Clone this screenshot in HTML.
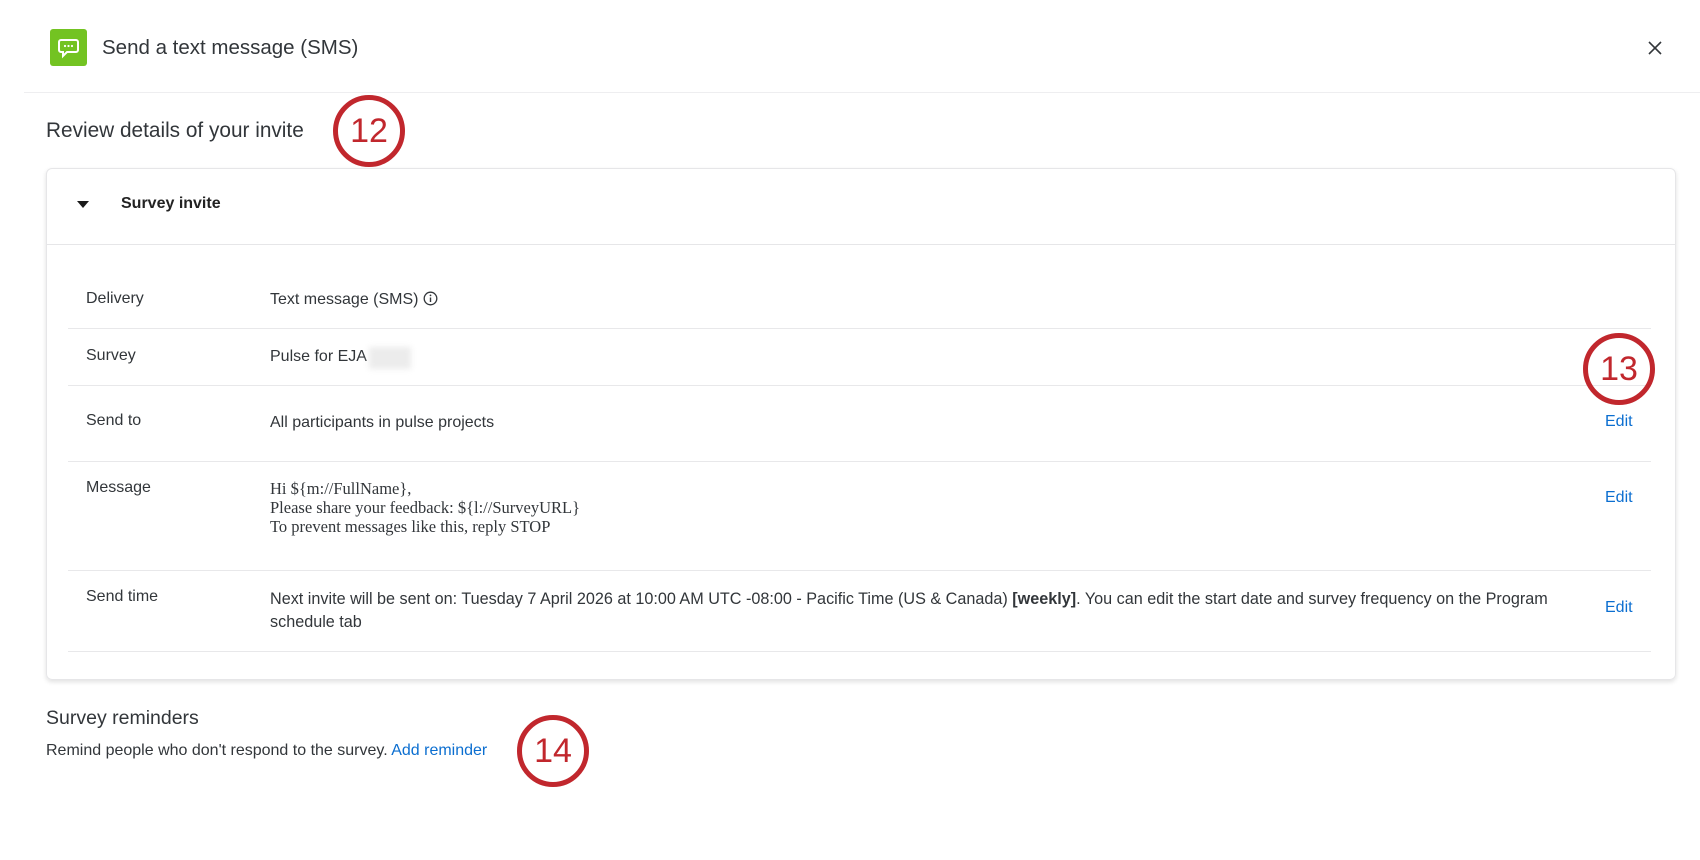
<!DOCTYPE html>
<html><head><meta charset="utf-8"><style>
*{margin:0;padding:0;box-sizing:border-box}
body{width:1700px;height:860px;background:#fff;font-family:"Liberation Sans",sans-serif;color:#32363a;position:relative;overflow:hidden}
.a{position:absolute;white-space:nowrap}
.t{font-size:16px;line-height:20px}
.line{position:absolute;left:68px;width:1583px;height:1px;background:#e8e8ea}
.edit{color:#0b6ed0;font-size:16px}
.circ{position:absolute;width:72px;height:72px;border:5px solid #c1272d;border-radius:50%;color:#c1272d;font-size:34px;line-height:62px;text-align:center}
</style></head><body>
<div class="a" style="left:50px;top:29px;width:37px;height:37px;background:#73c322;border-radius:3px">
<svg width="37" height="37" viewBox="0 0 37 37"><path d="M11 11h15a2 2 0 0 1 2 2v8a2 2 0 0 1-2 2h-9l-4 4v-4h-2a2 2 0 0 1-2-2v-8a2 2 0 0 1 2-2z" fill="none" stroke="#fff" stroke-width="2"/><circle cx="15" cy="17" r="1.1" fill="#fff"/><circle cx="18.5" cy="17" r="1.1" fill="#fff"/><circle cx="22" cy="17" r="1.1" fill="#fff"/></svg></div>
<div class="a" style="left:102px;top:36px;font-size:20.5px;line-height:24px">Send a text message (SMS)</div>
<svg class="a" style="left:1647px;top:40px" width="16" height="16"><path d="M2 2L14 14M14 2L2 14" stroke="#32363a" stroke-width="1.6"/></svg>
<div class="a" style="left:24px;top:92px;width:1676px;height:1px;background:#eeeef0"></div>
<div class="a" style="left:46px;top:119px;font-size:20.8px;line-height:24px">Review details of your invite</div>
<div class="circ" style="left:333px;top:95px">12</div>
<div class="a" style="left:46px;top:168px;width:1630px;height:512px;border:1px solid #e6e6e8;border-radius:6px;box-shadow:0 2px 5px rgba(0,0,0,.12)"></div>
<div class="a" style="left:47px;top:244px;width:1628px;height:1px;background:#e6e6e8"></div>
<svg class="a" style="left:77px;top:201px" width="12" height="7"><path d="M0 0h12L6 7z" fill="#1a1a1a"/></svg>
<div class="a" style="left:121px;top:195px;font-size:16px;font-weight:bold;color:#222">Survey invite</div>
<div class="a t" style="left:86px;top:289px">Delivery</div>
<div class="a t" style="left:270px;top:290px">Text message (SMS)</div>
<svg class="a" style="left:423px;top:291px" width="15" height="15"><circle cx="7.5" cy="7.5" r="6.3" fill="none" stroke="#32363a" stroke-width="1.3"/><path d="M7.5 6.5v4.5" stroke="#32363a" stroke-width="1.4"/><circle cx="7.5" cy="4.4" r=".9" fill="#32363a"/></svg>
<div class="line" style="top:328px"></div>
<div class="a t" style="left:86px;top:346px">Survey</div>
<div class="a t" style="left:270px;top:347px">Pulse for EJA</div>
<div class="a" style="left:369px;top:347px;width:42px;height:22px;background:#ececec;filter:blur(3px)"></div>
<div class="line" style="top:385px"></div>
<div class="a t" style="left:86px;top:411px">Send to</div>
<div class="a t" style="left:270px;top:413px">All participants in pulse projects</div>
<div class="a edit" style="left:1605px;top:413px">Edit</div>
<div class="line" style="top:461px"></div>
<div class="a t" style="left:86px;top:478px">Message</div>
<div class="a" style="left:270px;top:479px;font-family:'Liberation Serif',serif;font-size:16.5px;line-height:19px">Hi ${m://FullName},<br>Please share your feedback: ${l://SurveyURL}<br>To prevent messages like this, reply STOP</div>
<div class="a edit" style="left:1605px;top:489px">Edit</div>
<div class="line" style="top:570px"></div>
<div class="a t" style="left:86px;top:587px">Send time</div>
<div class="a t" style="left:270px;top:588px;line-height:23px;font-size:16.2px">Next invite will be sent on: Tuesday 7 April 2026 at 10:00 AM UTC -08:00 - Pacific Time (US &amp; Canada) <b>[weekly]</b>. You can edit the start date and survey frequency on the Program<br>schedule tab</div>
<div class="a edit" style="left:1605px;top:599px">Edit</div>
<div class="line" style="top:651px"></div>
<div class="circ" style="left:1583px;top:333px">13</div>
<div class="a" style="left:46px;top:707px;font-size:19.5px;line-height:22px">Survey reminders</div>
<div class="a t" style="left:46px;top:741px">Remind people who don't respond to the survey. <span style="color:#0b6ed0">Add reminder</span></div>
<div class="circ" style="left:517px;top:715px">14</div>
</body></html>
